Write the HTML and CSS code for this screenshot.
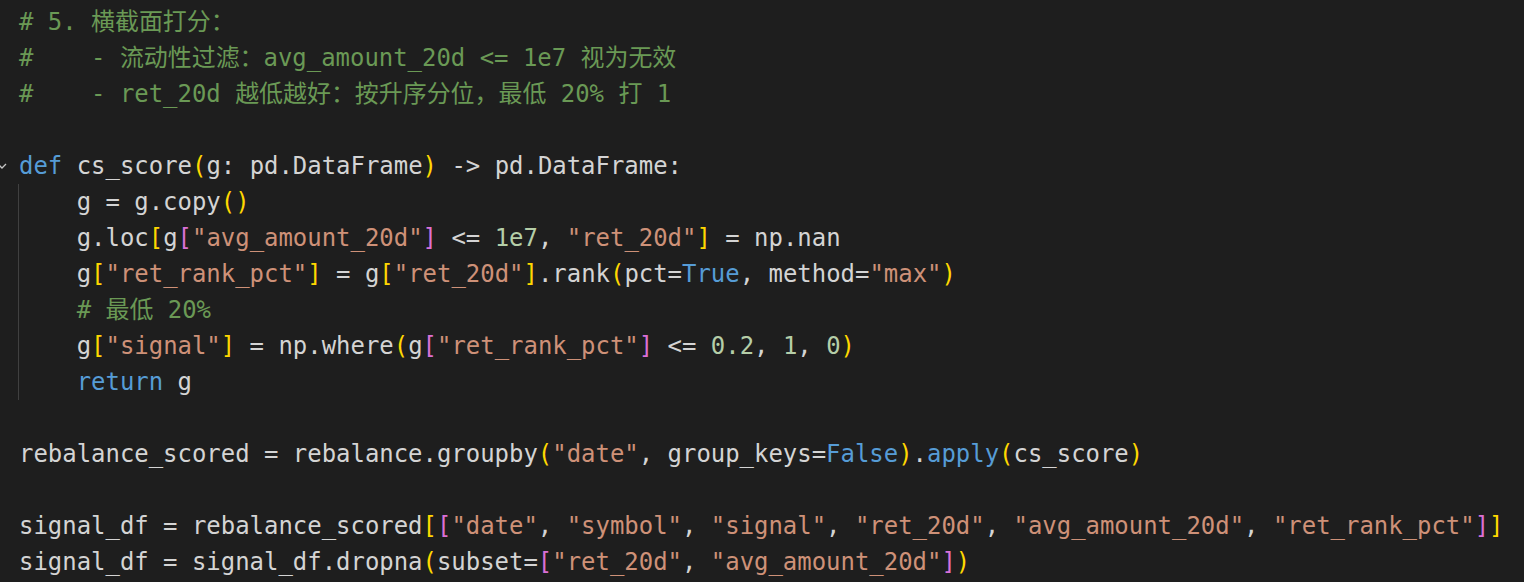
FILE: index.html
```html
<!DOCTYPE html>
<html lang="zh">
<head>
<meta charset="utf-8">
<title>code</title>
<link rel="stylesheet" href="styles.css">
</head>
<body>
<div class="editor">
<div class="line"><span class="c"># 5. 横截面打分：</span></div>
<div class="line"><span class="c">#    - 流动性过滤：avg_amount_20d &lt;= 1e7 视为无效</span></div>
<div class="line"><span class="c">#    - ret_20d 越低越好：按升序分位，最低 20% 打 1</span></div>
<div class="line"> </div>
<div class="line fold"><svg class="chev" width="8" height="8" viewBox="0 0 8 8"><path d="M-2 2 L2 6 L6 2" fill="none" stroke="#c5c5c5" stroke-width="1.3"/></svg><span class="k">def</span> cs_score<span class="y">(</span>g: pd.DataFrame<span class="y">)</span> -&gt; pd.DataFrame:</div>
<div class="block">
<div class="line">    g = g.copy<span class="y">()</span></div>
<div class="line">    g.loc<span class="y">[</span>g<span class="p">[</span><span class="s">"avg_amount_20d"</span><span class="p">]</span> &lt;= <span class="n">1e7</span>, <span class="s">"ret_20d"</span><span class="y">]</span> = np.nan</div>
<div class="line">    g<span class="y">[</span><span class="s">"ret_rank_pct"</span><span class="y">]</span> = g<span class="y">[</span><span class="s">"ret_20d"</span><span class="y">]</span>.rank<span class="y">(</span>pct=<span class="k">True</span>, method=<span class="s">"max"</span><span class="y">)</span></div>
<div class="line">    <span class="c"># 最低 20%</span></div>
<div class="line">    g<span class="y">[</span><span class="s">"signal"</span><span class="y">]</span> = np.where<span class="y">(</span>g<span class="p">[</span><span class="s">"ret_rank_pct"</span><span class="p">]</span> &lt;= <span class="n">0.2</span>, <span class="n">1</span>, <span class="n">0</span><span class="y">)</span></div>
<div class="line">    <span class="k">return</span> g</div>
</div>
<div class="line"> </div>
<div class="line">rebalance_scored = rebalance.groupby<span class="y">(</span><span class="s">"date"</span>, group_keys=<span class="k">False</span><span class="y">)</span>.<span class="k">apply</span><span class="y">(</span>cs_score<span class="y">)</span></div>
<div class="line"> </div>
<div class="line">signal_df = rebalance_scored<span class="y">[</span><span class="p">[</span><span class="s">"date"</span>, <span class="s">"symbol"</span>, <span class="s">"signal"</span>, <span class="s">"ret_20d"</span>, <span class="s">"avg_amount_20d"</span>, <span class="s">"ret_rank_pct"</span><span class="p">]</span><span class="y">]</span></div>
<div class="line">signal_df = signal_df.dropna<span class="y">(</span>subset=<span class="p">[</span><span class="s">"ret_20d"</span>, <span class="s">"avg_amount_20d"</span><span class="p">]</span><span class="y">)</span></div>
</div>
</body>
</html>
```
FILE: styles.css
```css
html, body {
  margin: 0;
  padding: 0;
  background: #1e1e1e;
  height: 100%;
  overflow: hidden;
}
.editor {
  padding-top: 4px;
  font-family: "DejaVu Sans Mono", "Noto Sans CJK SC", monospace;
  font-size: 23.95px;
  line-height: 36px;
  color: #d4d4d4;
}
.line {
  height: 36px;
  padding-left: 19px;
  white-space: pre;
}
.fold {
  position: relative;
}
.chev {
  position: absolute;
  left: 0;
  top: 14px;
}
.block {
  background: linear-gradient(#404040, #404040) no-repeat 18px 0 / 1px 100%;
}
.c { color: #6a9955; }
.k { color: #569cd6; }
.s { color: #ce9178; }
.n { color: #b5cea8; }
.y { color: #ffd700; }
.p { color: #da70d6; }
```
